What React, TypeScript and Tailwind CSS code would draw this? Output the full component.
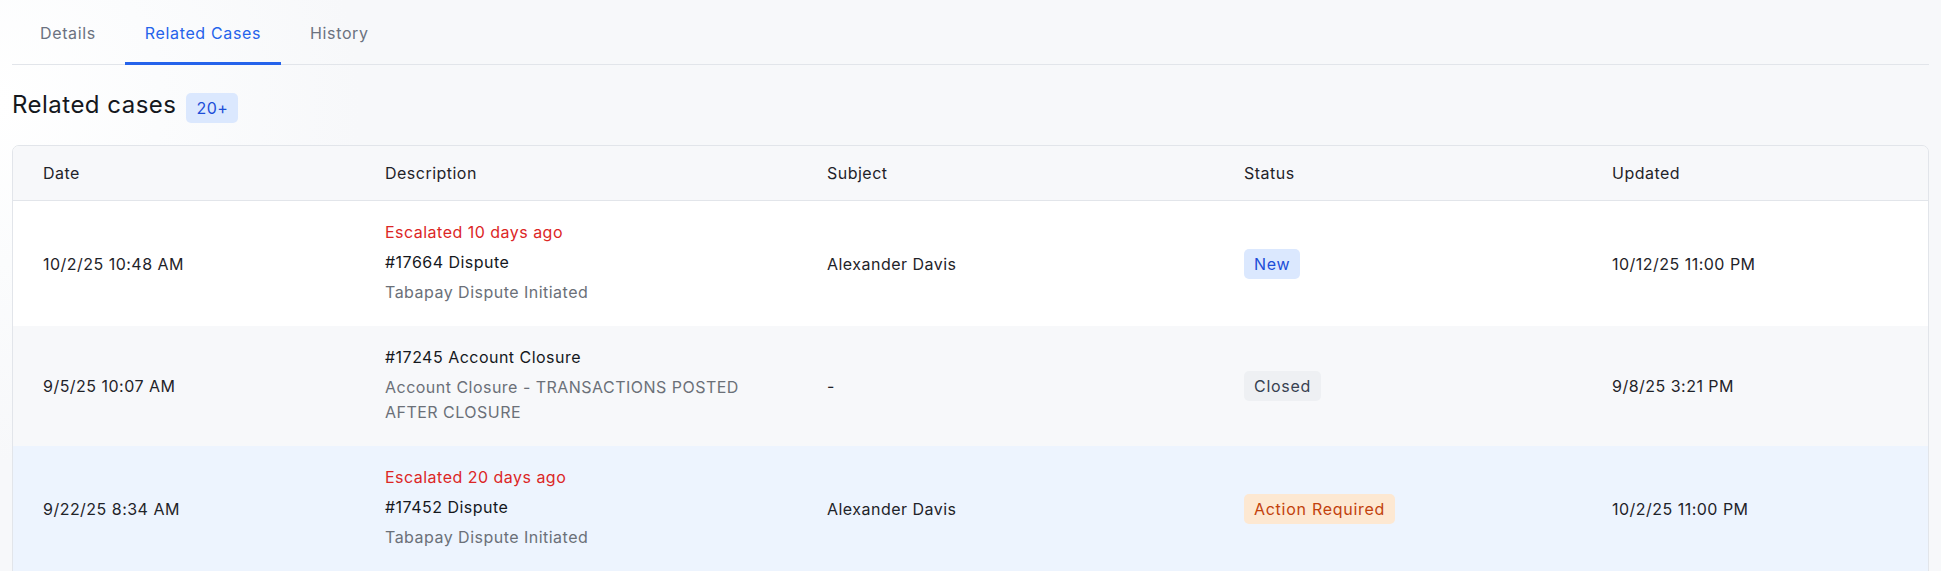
import React from 'react';

type Status = 'New' | 'Closed' | 'Action Required';

interface CaseRow {
  date: string;
  escalated?: string;
  title: string;
  detail: string;
  subject: string;
  status: Status;
  updated: string;
  tone: 'white' | 'gray' | 'blue';
}

const ROWS: CaseRow[] = [
  {
    date: '10/2/25 10:48 AM',
    escalated: 'Escalated 10 days ago',
    title: '#17664 Dispute',
    detail: 'Tabapay Dispute Initiated',
    subject: 'Alexander Davis',
    status: 'New',
    updated: '10/12/25 11:00 PM',
    tone: 'white',
  },
  {
    date: '9/5/25 10:07 AM',
    title: '#17245 Account Closure',
    detail: 'Account Closure - TRANSACTIONS POSTED AFTER CLOSURE',
    subject: '-',
    status: 'Closed',
    updated: '9/8/25 3:21 PM',
    tone: 'gray',
  },
  {
    date: '9/22/25 8:34 AM',
    escalated: 'Escalated 20 days ago',
    title: '#17452 Dispute',
    detail: 'Tabapay Dispute Initiated',
    subject: 'Alexander Davis',
    status: 'Action Required',
    updated: '10/2/25 11:00 PM',
    tone: 'blue',
  },
];

const STATUS_STYLES: Record<Status, string> = {
  New: 'bg-[#dbe8fe] text-[#1d4ed8]',
  Closed: 'bg-[#eef0f3] text-[#374151]',
  'Action Required': 'bg-[#fde8d2] text-[#c2410c]',
};

const ROW_TONES = {
  white: 'bg-white',
  gray: 'bg-[#f7f8fa]',
  blue: 'bg-[#edf4fe]',
};

const GRID = 'grid grid-cols-[342px_442px_417px_368px_1fr]';

const TABS = ['Details', 'Related Cases', 'History'];

function StatusBadge({ status }: { status: Status }) {
  return (
    <span className={`inline-flex h-[30px] items-center rounded-[5px] px-[10px] tracking-[0.045em] ${STATUS_STYLES[status]}`}>
      {status}
    </span>
  );
}

export default function App() {
  const active = 'Related Cases';

  return (
    <div className="min-h-[571px] bg-[#f7f8fa] font-['Inter','Noto_Sans',sans-serif] tracking-[0.03em] text-[#1f2329]">
      <div className="min-h-[571px] bg-[radial-gradient(circle_at_0%_18%,#ffffff_0px,#fbfcfd_160px,#f7f8fa_360px)] px-3">
        <div className="flex h-[65px] gap-[9px] border-b border-[#e2e5ea] pl-2">
          {TABS.map((tab) => (
            <button
              key={tab}
              className={`-mb-px flex h-[65px] items-center border-b-[3px] px-5 pt-[3px] text-[16px] tracking-[0.04em] ${
                tab === active ? 'border-[#2563eb] text-[#2563eb]' : 'border-transparent text-[#6b7280]'
              }`}
            >
              {tab}
            </button>
          ))}
        </div>

        <div className="mt-[24px] flex items-start gap-[10px]">
          <h2 className="text-[24px] leading-8 font-normal tracking-[0.02em] text-[#15181d]">Related cases</h2>
          <span className="mt-[4px] inline-flex h-[30px] items-center rounded-[5px] bg-[#dbe8fe] px-[10px] text-[16px] text-[#1d4ed8]">
            20+
          </span>
        </div>

        <div className="mt-[22px] overflow-hidden rounded-t-[7px] border border-[#e2e5ea] text-[16px]">
          <div className={`${GRID} h-[55px] items-center border-b border-[#e2e5ea] bg-[#f7f8fa] text-[#1f2329]`}>
            {['Date', 'Description', 'Subject', 'Status', 'Updated'].map((h) => (
              <div key={h} className="px-[30px]">
                {h}
              </div>
            ))}
          </div>

          {ROWS.map((row) => (
            <div key={row.title} className={`${GRID} items-center ${ROW_TONES[row.tone]}`}>
              <div className="px-[30px]">{row.date}</div>
              <div className="flex flex-col gap-[6px] px-[30px] pt-[19px] pb-[21px] leading-6">
                {row.escalated && <div className="text-[#dc2626]">{row.escalated}</div>}
                <div className="text-[#15181d]">{row.title}</div>
                <div className="leading-[25px] text-[#6b7078]">{row.detail}</div>
              </div>
              <div className="px-[30px]">{row.subject}</div>
              <div className="px-[30px]">
                <StatusBadge status={row.status} />
              </div>
              <div className="px-[30px]">{row.updated}</div>
            </div>
          ))}
        </div>
      </div>
    </div>
  );
}
